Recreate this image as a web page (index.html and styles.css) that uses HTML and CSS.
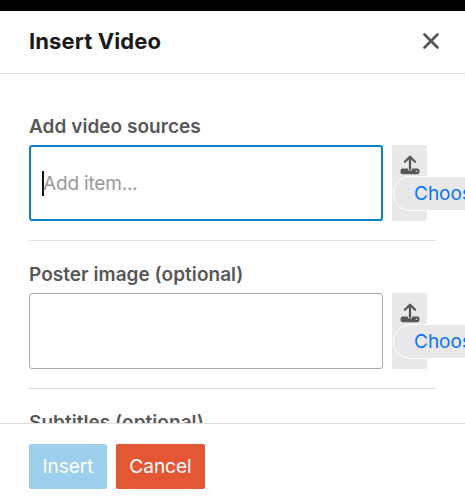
FILE: index.html
```html
<!DOCTYPE html>
<html lang="en">
<head>
<meta charset="utf-8">
<title>Insert Video</title>
<link rel="stylesheet" href="styles.css">
</head>
<body>
<div class="modal">
  <header class="modal-header">
    <h1 class="title">Insert Video</h1>
    <svg class="close" viewBox="0 0 18 18"><path d="M2.5 2.5 15.5 15.5M15.5 2.5 2.5 15.5"/></svg>
  </header>
  <main class="modal-body">
    <section class="field">
      <h2 class="label">Add video sources</h2>
      <div class="row">
        <div class="input focused"><span class="caret"></span><span class="placeholder">Add item...</span></div>
        <div class="upload">
          <svg class="upload-icon" viewBox="0 0 20 20"><path class="arrow" d="M10 14V2.2M4.9 6.8 10 1.8 15.1 6.8"/><path class="tray" d="M2.7 13.6H7.8V14.2Q7.8 15.4 10 15.4T12.2 14.2V13.6H17.3Q19.5 13.6 19.5 15.8V17Q19.5 19.2 17.3 19.2H2.7Q.5 19.2.5 17V15.8Q.5 13.6 2.7 13.6Z"/><circle class="light" cx="16.5" cy="16.3" r=".8"/></svg>
          <div class="choose">Choose File</div>
        </div>
      </div>
    </section>
    <section class="field">
      <h2 class="label">Poster image (optional)</h2>
      <div class="row">
        <div class="input"></div>
        <div class="upload">
          <svg class="upload-icon" viewBox="0 0 20 20"><path class="arrow" d="M10 14V2.2M4.9 6.8 10 1.8 15.1 6.8"/><path class="tray" d="M2.7 13.6H7.8V14.2Q7.8 15.4 10 15.4T12.2 14.2V13.6H17.3Q19.5 13.6 19.5 15.8V17Q19.5 19.2 17.3 19.2H2.7Q.5 19.2.5 17V15.8Q.5 13.6 2.7 13.6Z"/><circle class="light" cx="16.5" cy="16.3" r=".8"/></svg>
          <div class="choose">Choose File</div>
        </div>
      </div>
    </section>
    <section class="field">
      <h2 class="label">Subtitles (optional)</h2>
    </section>
  </main>
  <footer class="modal-footer">
    <button class="btn insert">Insert</button>
    <button class="btn cancel">Cancel</button>
  </footer>
</div>
</body>
</html>
```

FILE: styles.css
```css
* { box-sizing: border-box; }
body { margin: 0; font-family: Inter, sans-serif; background: #000; overflow: hidden; }
.modal { height: 489px; margin-top: 11px; background: #fff; display: flex; flex-direction: column; overflow: hidden; }
.modal-header { height: 63px; flex: none; display: flex; justify-content: space-between; align-items: center; padding: 0 25px 2px 29px; border-bottom: 1px solid #e4e4e4; }
.title { margin: 0; font-size: 22px; font-weight: 700; letter-spacing: .1px; color: #1a1a1a; white-space: nowrap; }
.close { width: 18px; height: 18px; fill: none; stroke: #555; stroke-width: 2.7; stroke-linecap: round; }
.modal-body { height: 349px; flex: none; padding: 41px 29px 0; overflow: hidden; }
.field { height: 126px; border-bottom: 1px solid #e2e2e2; margin-bottom: 22px; }
.label { margin: 0 0 6px; height: 24px; line-height: 24px; font-size: 19px; font-weight: 600; letter-spacing: .04px; color: #585858; white-space: nowrap; }
.row { display: flex; gap: 9px; }
.input { width: 354px; height: 76px; border: 1px solid #aaa; border-radius: 3px; display: flex; align-items: center; padding-left: 12px; flex: none; }
.focused { border: 2px solid #0880c4; padding-left: 11px; }
.caret { width: 2px; height: 25px; background: #111; margin-right: -1px; }
.placeholder { font-size: 19px; letter-spacing: -.18px; color: #999; }
.upload { position: relative; width: 35px; height: 76px; flex: none; background: #e9e9e9; border-radius: 2px; }
.upload-icon { position: absolute; left: 8px; top: 10px; width: 20px; height: 20px; }
.arrow { fill: none; stroke: #585858; stroke-width: 2.3; stroke-linecap: round; stroke-linejoin: round; }
.tray { fill: #585858; }
.light { fill: #ddd; }
.choose { position: absolute; left: 1px; top: 31px; width: 150px; height: 35px; border: 1.5px solid #fff; border-radius: 18px; background: #e8e8eb; color: #0a74f5; font-size: 19px; line-height: 34px; padding-left: 20px; white-space: nowrap; }
.modal-footer { flex: 1; border-top: 1px solid #dedede; display: flex; gap: 9px; padding: 20px 29px 0; }
.btn { height: 45px; border: 0; border-radius: 2px; padding: 0; color: #fff; font: 400 19px Inter, sans-serif; }
.insert { width: 78px; background: #9bcfeb; }
.cancel { width: 89px; background: #e45735; }
```
